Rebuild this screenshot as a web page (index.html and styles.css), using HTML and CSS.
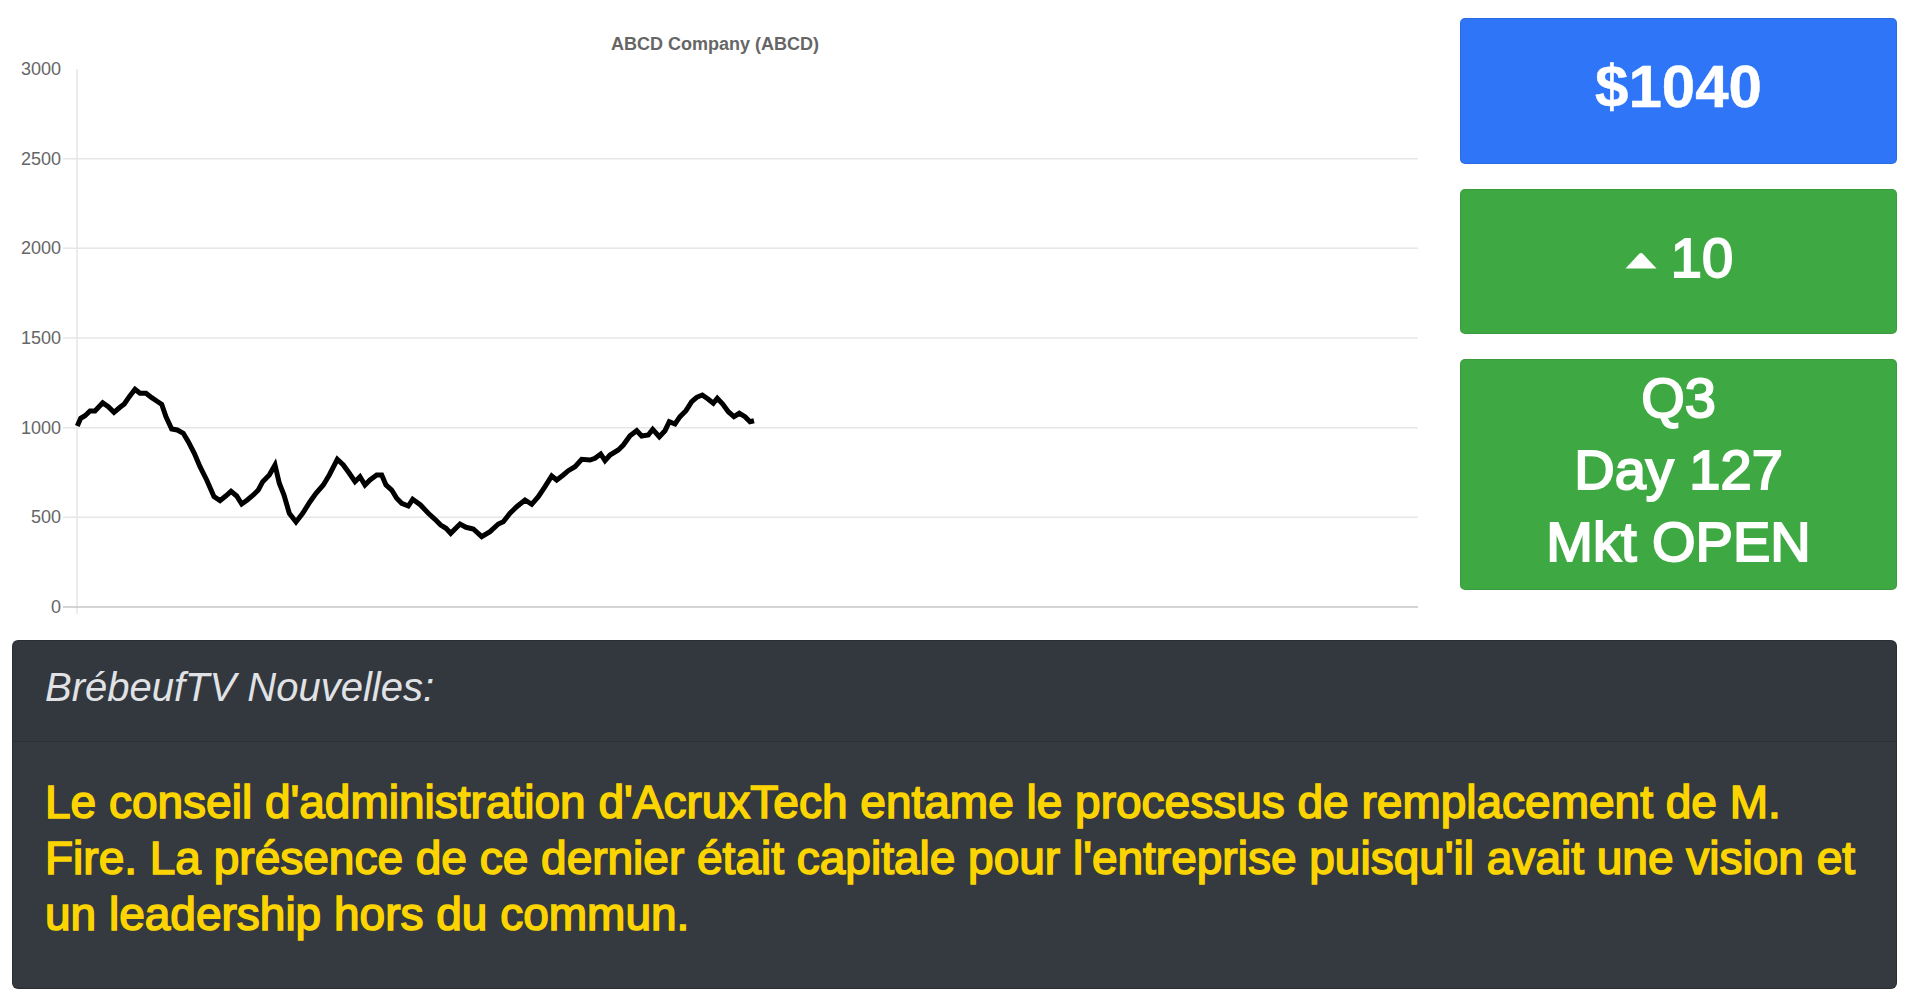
FILE: index.html
```html
<!DOCTYPE html>
<html lang="fr">
<head>
<meta charset="utf-8">
<title>BrébeufTV Bourse</title>
<link rel="stylesheet" href="styles.css">
</head>
<body>
<div class="page">
  <div class="top">
    <div class="chart">
      <svg class="chart-svg" viewBox="12 18 1418 612" width="1418" height="612" xmlns="http://www.w3.org/2000/svg">
        <text class="chart-title" x="715" y="50">ABCD Company (ABCD)</text>
        <g class="grid">
          <line x1="63" y1="158.7" x2="1418" y2="158.7"/>
          <line x1="63" y1="248.3" x2="1418" y2="248.3"/>
          <line x1="63" y1="338" x2="1418" y2="338"/>
          <line x1="63" y1="427.7" x2="1418" y2="427.7"/>
          <line x1="63" y1="517.3" x2="1418" y2="517.3"/>
          <line x1="77" y1="69" x2="77" y2="614"/>
        </g>
        <line class="zero" x1="63" y1="607" x2="1418" y2="607"/>
        <g class="ticks">
          <text x="61" y="75">3000</text>
          <text x="61" y="165">2500</text>
          <text x="61" y="254">2000</text>
          <text x="61" y="344">1500</text>
          <text x="61" y="434">1000</text>
          <text x="61" y="523">500</text>
          <text x="61" y="613">0</text>
        </g>
        <polyline class="price-line" points="77.3,426 80.7,418.3 85,415.7 90,411 95,411 102.7,402.7 108.3,406.7 114,412.3 120,407.3 124.3,404 129.3,396.7 135,389.3 140,393.3 146,393.3 151.7,397.7 156.7,401 161.7,404.3 166,416.7 171.7,429 177.3,430 183.3,433.3 188.3,441.7 194.3,453.3 200,466.7 206.7,480 214,496.7 220,500.7 225.7,496 231,491.3 236.7,496 241.7,504 247.3,500 253.3,495 258.3,490 262.7,481.7 269.3,475 275,465 279.3,483.3 284,495 289.3,513.3 296,522 302.7,513.3 310,501.7 316,493.3 323.3,485 329.3,475 337.3,459.3 343.3,465 349.3,473.3 355,481.7 360,476.7 365,485 370,480 376.7,475 381.7,475 386,485 391.7,490 396.7,498.3 401.7,503.3 408.3,506 412.7,499.3 420.5,505 428.3,513.3 435,519.3 440.7,525 446,528.3 450.7,533.3 460,524 466,527.3 473.3,529 481.7,536.7 490,531.7 498.3,524 503.3,521.7 510,513.3 516.7,506.7 525,500 531.7,504.3 538.3,496.7 545,486.7 551.7,476 556.7,480 563.3,475 568.3,470.7 575,466.7 581.7,459.3 590,460 595,458.3 600.7,454 605,460.7 610,455 618.3,450 623.3,445 630,435.7 636.7,430.7 641.7,436 648.3,435 652.7,429.3 659.3,436.7 665,430.7 669.3,421.7 675,424 680,416.7 686,410.7 691.7,401.7 696.7,397.3 702.3,395 708.3,399.3 713.3,403.3 717.3,398.3 722.7,404 728.3,411.7 734,416.7 739.3,413.3 745,416.7 750,421.7 754,420.7"/>
      </svg>
    </div>
    <div class="stats">
      <div class="stat stat-price"><div class="stat-line">$1040</div></div>
      <div class="stat stat-change"><div class="stat-line"><svg class="caret" viewBox="0 0 34 18" width="34" height="18" xmlns="http://www.w3.org/2000/svg"><path d="M1.5 17.5 L15 3 Q17 1 19 3 L32.5 17.5 Z"/></svg>10</div></div>
      <div class="stat stat-session">
        <div class="stat-line">Q3</div>
        <div class="stat-line">Day 127</div>
        <div class="stat-line">Mkt OPEN</div>
      </div>
    </div>
  </div>
  <div class="news">
    <div class="news-head">BrébeufTV Nouvelles:</div>
    <div class="news-body">
      <p class="news-text">Le conseil d'administration d'AcruxTech entame le processus de remplacement de M. Fire. La présence de ce dernier était capitale pour l'entreprise puisqu'il avait une vision et un leadership hors du commun.</p>
    </div>
  </div>
</div>
</body>
</html>
```

FILE: styles.css
```css
body {
  margin: 0;
  background: #ffffff;
  font-family: "Liberation Sans", Arial, Helvetica, sans-serif;
}

.page {
  padding: 18px 11px 20px 12px;
}

.top {
  display: grid;
  grid-template-columns: 1fr 437px;
  column-gap: 30px;
  align-items: start;
}

.chart-svg {
  display: block;
}

.chart-title {
  font-family: "Liberation Sans", Arial, sans-serif;
  font-size: 18px;
  font-weight: bold;
  fill: #666666;
  text-anchor: middle;
}

.grid line {
  stroke: #e6e6e6;
  stroke-width: 1.5;
}

.zero {
  stroke: #c6c6c6;
  stroke-width: 1.5;
}

.ticks text {
  font-family: "Liberation Sans", Arial, sans-serif;
  font-size: 18px;
  fill: #666666;
  text-anchor: end;
}

.price-line {
  fill: none;
  stroke: #000000;
  stroke-width: 5;
  stroke-linejoin: miter;
  stroke-miterlimit: 4;
}

.stats {
  display: flex;
  flex-direction: column;
  gap: 25px;
}

.stat {
  border-radius: 5px;
  color: #ffffff;
  text-align: center;
  border: 1px solid rgba(0, 0, 0, 0.08);
}

.stat-line {
  line-height: 72px;
  font-size: 56px;
  -webkit-text-stroke: 2px #ffffff;
}

.stat-price {
  background: #2e75f8;
  padding: 32px 0 40px;
}

.stat-price .stat-line {
  font-size: 60px;
  font-weight: bold;
  -webkit-text-stroke: 0.5px #ffffff;
}

.stat-change {
  background: #3ea942;
  padding: 32px 0 39px;
}

.caret {
  fill: #ffffff;
  margin-right: 13px;
  vertical-align: 8px;
}

.stat-session {
  background: #3ea942;
  padding: 2px 0 11px;
}

.news {
  margin-top: 10px;
  background: #343a40;
  border: 1px solid rgba(0, 0, 0, 0.2);
  border-radius: 6px;
  overflow: hidden;
}

.news-head {
  height: 101px;
  box-sizing: border-box;
  padding: 0 32px 8px;
  display: flex;
  align-items: center;
  font-style: italic;
  font-size: 40px;
  color: #e1e2e5;
  background: rgba(0, 0, 0, 0.03);
  border-bottom: 1px solid rgba(0, 0, 0, 0.125);
}

.news-body {
  padding: 32px 32px 46px;
}

.news-text {
  margin: 0;
  font-size: 46px;
  line-height: 56px;
  color: #fcd500;
  -webkit-text-stroke: 1.6px #fcd500;
}
```
